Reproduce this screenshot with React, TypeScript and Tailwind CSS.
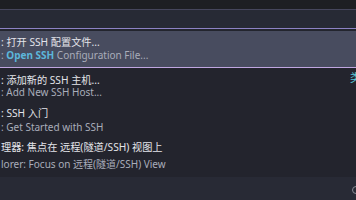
export default function App() {
  const rows = [
    { title: ": 添加新的 SSH 主机...", sub: ": Add New SSH Host...", pad: "pt-[6px] gap-0", tag: "类" },
    { title: ": SSH 入门", sub: ": Get Started with SSH", pad: "pt-[5px] gap-[2px]" },
    { title: "理器: 焦点在 远程(隧道/SSH) 视图上", sub: "lorer: Focus on 远程(隧道/SSH) View", pad: "pt-[5px] gap-[5px]" },
  ]

  return (
    <div
      className="w-[356px] h-[200px] overflow-hidden bg-[#23242d] flex flex-col"
      style={{ fontFamily: '"Noto Sans", "Noto Sans CJK SC", sans-serif' }}
    >
      <div className="h-[9px] bg-[#1e1f23]" />
      <div className="h-[1px] bg-[#46465c]" />
      <div className="h-[18px] bg-[#272a35]" />
      <div className="h-[1px] bg-[#8c82c4]" />
      <div className="h-[2px] bg-[#23252e]" />

      <div className="h-[37px] bg-[#484c5f] border-b border-[#c0a6e0] flex flex-col justify-center pl-px">
        <div className="text-[10.2px] leading-[13px] text-[#e4e4ea] whitespace-nowrap">: 打开 SSH 配置文件...</div>
        <div className="text-[10px] leading-[13px] text-[#a9adba] whitespace-nowrap">
          : <span className="font-bold text-[#5cb6da]">Open SSH</span> Configuration File...
        </div>
      </div>

      {rows.map((r, i) => (
        <div key={i} className={"relative h-[34px] flex flex-col pl-px " + r.pad}>
          <div className="text-[10.2px] leading-[12px] text-[#e4e4ea] whitespace-nowrap">{r.title}</div>
          <div className="text-[10px] leading-[12px] text-[#a9adba] whitespace-nowrap">{r.sub}</div>
          {r.tag && (
            <span className="absolute right-[-5px] top-[2px] text-[11px] text-[#5cc6d8]">{r.tag}</span>
          )}
        </div>
      ))}

      <div className="flex-1" />
      <div className="relative h-[23px] bg-[#282a35]">
        <span className="absolute right-[-4px] top-[9px] w-[8px] h-[8px] rounded-full border border-[#8a8c96]" />
      </div>
    </div>
  )
}
